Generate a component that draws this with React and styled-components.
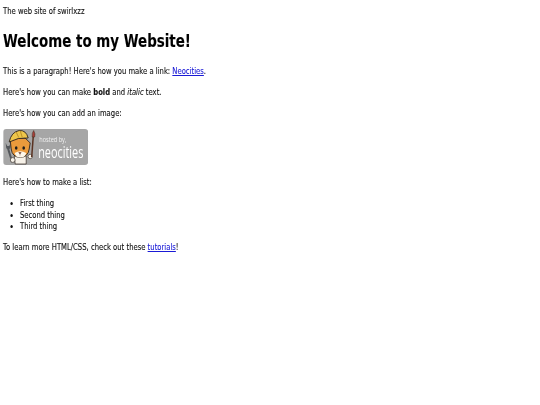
import React from 'react';
import styled, { createGlobalStyle } from 'styled-components';

const SQUEEZE = 0.8;

const GlobalStyle = createGlobalStyle`
  html, body {
    margin: 0;
    background: #fff;
    overflow: hidden;
  }
`;

// the whole shot is narrower than it is tall, so the page is squeezed sideways
const Page = styled.div`
  width: ${540 / SQUEEZE}px;
  padding: 6px ${3 / SQUEEZE}px 0;
  box-sizing: border-box;
  transform: scaleX(${SQUEEZE});
  transform-origin: left top;
  filter: blur(0.25px);
  font-family: "DejaVu Sans", sans-serif;
  font-size: 8.55px;
  line-height: 11.5px;
  color: #111;
  -webkit-text-stroke: 0.12px #111;
`;

const Title = styled.h1`
  margin: 13px 0 14px;
  font-size: 16.8px;
  line-height: 21px;
  font-weight: 700;
  color: #000;
`;

const Text = styled.p`
  margin: 0 0 9.5px;
`;

const Link = styled.a`
  color: #1a1ad6;
  -webkit-text-stroke: 0.12px #1a1ad6;
  text-decoration: underline;
`;

const BadgeLink = styled.a`
  display: block;
  height: 36px;
  margin: 0 0 12.5px;
`;

const BadgeArt = styled.svg`
  display: block;
  width: ${85 / SQUEEZE}px;
  height: 36px;
  -webkit-text-stroke: 0;
`;

const List = styled.ul`
  margin: 0 0 9.5px;
  padding: 0 0 0 ${17 / SQUEEZE}px;
`;

const Badge = () => (
  <BadgeArt viewBox="0 0 85 36" preserveAspectRatio="none">
    <rect x="0" y="0" width="85" height="36" rx="3" fill="#a6a6a6" />
    {/* wrench */}
    <path d="M9 33 L5 20" stroke="#55585c" strokeWidth="2" fill="none" />
    <path d="M2.5 14 L3 19 Q5 22 7 19 L7.5 14 L6 17 L4 17 Z" fill="#55585c" />
    {/* body and paws */}
    <path d="M11 27 Q18 25 23 27 L23 35 L12 35 Z" fill="#f6f1e8" stroke="#2e241c" strokeWidth="0.7" />
    <circle cx="9.5" cy="31" r="2.4" fill="#f6f1e8" stroke="#2e241c" strokeWidth="0.6" />
    <circle cx="27" cy="27.5" r="2.2" fill="#f6f1e8" stroke="#2e241c" strokeWidth="0.6" />
    {/* brush */}
    <path d="M28.5 28 L30 8" stroke="#5a3322" strokeWidth="1.5" />
    <path d="M29 8 Q28.5 4 30.5 1.5 Q32.5 5 31.5 8 Z" fill="#a8403a" stroke="#3a2a1c" strokeWidth="0.5" />
    {/* head with ears */}
    <path d="M7 11 L12 9 L22 9 L27 14 L26 20 Q25 28 17 28.5 Q9 28 8 20 Z" fill="#ea9a3c" stroke="#2e241c" strokeWidth="0.9" />
    <path d="M11.5 24 Q17 20.5 23 24 Q22 28.5 17 28.5 Q12.5 28.5 11.5 24 Z" fill="#fdf7ea" />
    <ellipse cx="13" cy="19" rx="1.3" ry="1.8" fill="#1c1c1c" />
    <ellipse cx="20.5" cy="19" rx="1.3" ry="1.8" fill="#1c1c1c" />
    <path d="M15.5 23.5 L18 23.5 L16.8 25 Z M16.8 25 L16.8 26.5" fill="#5a2a1c" stroke="#5a2a1c" strokeWidth="0.4" />
    {/* hard hat */}
    <path d="M6 13 Q8 3 16 1.5 Q23 1 25 9 Q15 8 6 13 Z" fill="#eec64a" stroke="#2e241c" strokeWidth="0.9" />
    <path d="M13 3 L15.5 8.5 M17 1.8 L19 8" stroke="#b58a24" strokeWidth="0.9" />
    <text transform="translate(36 13) scale(0.8 1)" fontFamily="Open Sans, sans-serif" fontSize="7" fill="#f2f2f2">hosted by,</text>
    <text transform="translate(35 29) scale(0.66 1)" fontFamily="Open Sans, sans-serif" fontSize="16.5" fill="#fff">neocities</text>
  </BadgeArt>
);

export default function App() {
  return (
    <>
      <GlobalStyle />
      <Page>
        <Text>The web site of swirlxzz</Text>
        <Title>Welcome to my Website!</Title>
        <Text>
          This is a paragraph! Here's how you make a link: <Link href="#">Neocities</Link>.
        </Text>
        <Text>
          Here's how you can make <strong>bold</strong> and <em>italic</em> text.
        </Text>
        <Text>Here's how you can add an image:</Text>
        <BadgeLink href="#">
          <Badge />
        </BadgeLink>
        <Text>Here's how to make a list:</Text>
        <List>
          <li>First thing</li>
          <li>Second thing</li>
          <li>Third thing</li>
        </List>
        <Text>
          To learn more HTML/CSS, check out these <Link href="#">tutorials</Link>!
        </Text>
      </Page>
    </>
  );
}
